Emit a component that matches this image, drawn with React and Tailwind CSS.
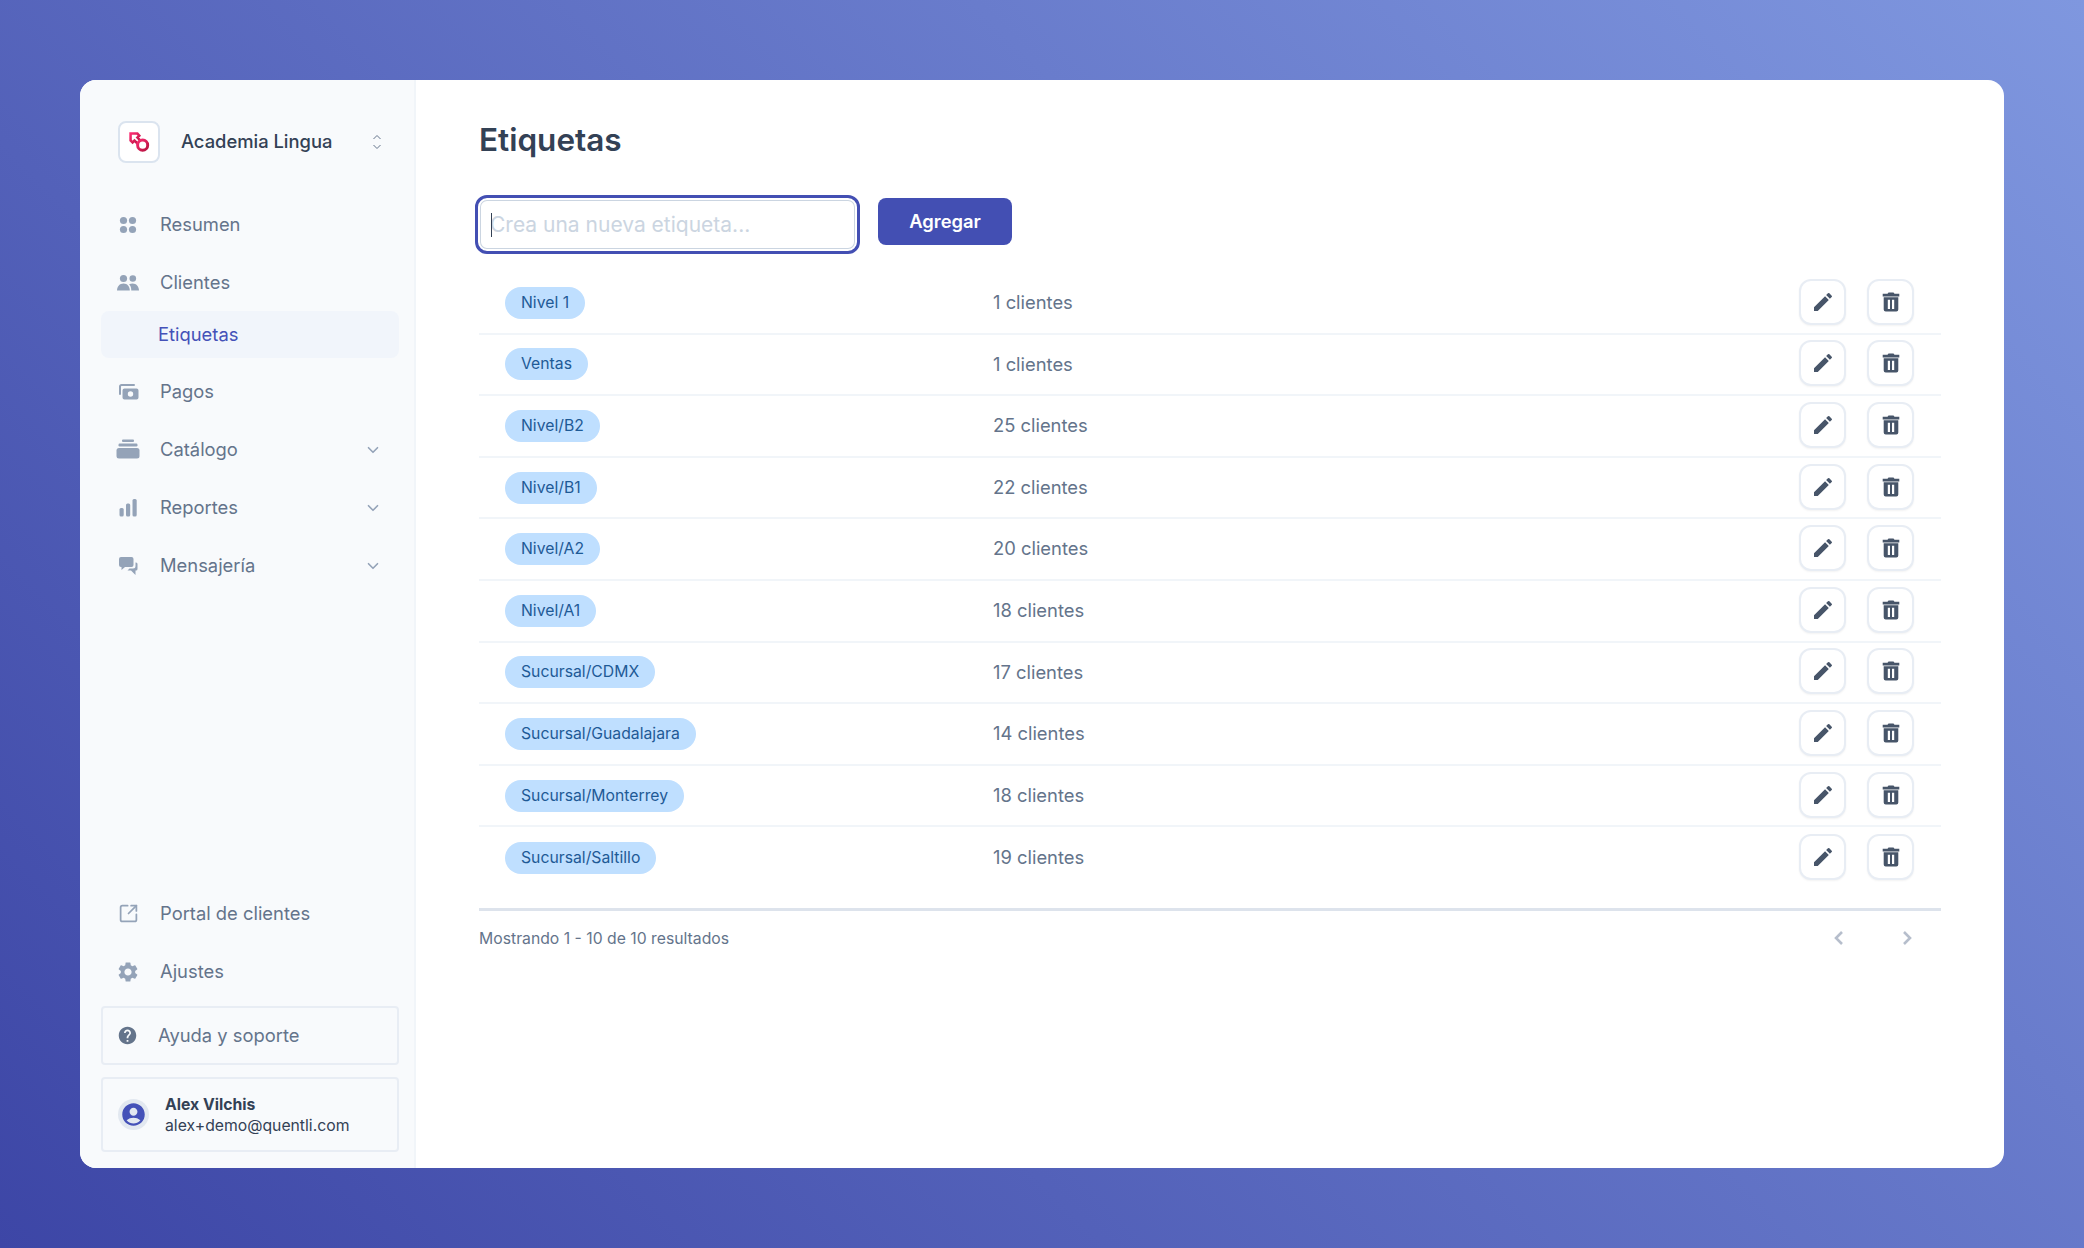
import { ChevronDown, SquareArrowOutUpRight } from 'lucide-react';
import { MdAccountCircle, MdEdit, MdHelp, MdSettings } from 'react-icons/md';

const tags = [
  ['Nivel 1', 1],
  ['Ventas', 1],
  ['Nivel/B2', 25],
  ['Nivel/B1', 22],
  ['Nivel/A2', 20],
  ['Nivel/A1', 18],
  ['Sucursal/CDMX', 17],
  ['Sucursal/Guadalajara', 14],
  ['Sucursal/Monterrey', 18],
  ['Sucursal/Saltillo', 19],
];

function DotsIcon() {
  return (
    <svg viewBox="0 0 24 24" className="w-6 h-6 fill-current">
      <circle cx="7.5" cy="7.5" r="3.6" />
      <circle cx="16.5" cy="7.5" r="3.6" />
      <circle cx="7.5" cy="16.5" r="3.6" />
      <circle cx="16.5" cy="16.5" r="3.6" />
    </svg>
  );
}

function UsersIcon() {
  return (
    <svg viewBox="0 0 24 24" className="w-6 h-6 fill-current overflow-visible">
      <circle cx="7.5" cy="7.5" r="3.6" />
      <circle cx="16.8" cy="7.5" r="3.3" />
      <path d="M1 19.5c0-4.2 2.8-7 6.5-7s6.3 2.8 6.3 7z" />
      <path d="M15.3 19.5c0-2.8-.8-4.9-2.2-6.3 1-.5 2.3-.7 3.5-.7 3.6 0 6.4 2.8 6.4 7z" />
    </svg>
  );
}

function CashIcon() {
  return (
    <svg viewBox="0 0 24 24" className="w-6 h-6 overflow-visible">
      <path d="M4 14V6.5A1.5 1.5 0 0 1 5.500 5H18" fill="none" stroke="currentColor" strokeWidth="2" strokeLinecap="round" />
      <path
        fill="currentColor"
        fillRule="evenodd"
        d="M8.500 8.500h12a2 2 0 0 1 2 2v7a2 2 0 0 1-2 2h-12a2 2 0 0 1-2-2v-7a2 2 0 0 1 2-2zM14.500 11.300a2.700 2.700 0 1 0 0 5.400 2.700 2.700 0 0 0 0-5.400z"
      />
    </svg>
  );
}

function StackIcon() {
  return (
    <svg viewBox="0 0 24 24" className="w-6 h-6 fill-current overflow-visible">
      <rect x="6" y="1.500" width="12" height="2.500" rx="1" />
      <rect x="2.500" y="5.500" width="19" height="3" rx="1.200" />
      <rect x="0.500" y="10" width="23" height="10.500" rx="2.500" />
    </svg>
  );
}

function BarsIcon() {
  return (
    <svg viewBox="0 0 24 24" className="w-6 h-6 fill-current">
      <rect x="3.500" y="12" width="4.200" height="8.500" rx="1.500" />
      <rect x="10" y="7.500" width="4.200" height="13" rx="1.500" />
      <rect x="16.500" y="3" width="4.200" height="17.500" rx="1.500" />
    </svg>
  );
}

function ChatIcon() {
  return (
    <svg viewBox="0 0 24 24" className="w-6 h-6 fill-current">
      <path d="M5 3h10.500a2 2 0 0 1 2 2v6a2 2 0 0 1-2 2H9l-3.500 3v-3H5a2 2 0 0 1-2-2V5a2 2 0 0 1 2-2z" />
      <path d="M19.500 8.500h.5a1.500 1.500 0 0 1 1.500 1.500v5a1.500 1.500 0 0 1-1.500 1.500h-.5V21l-4.500-4.500h-3.500l2-2h3.500a2.500 2.500 0 0 0 2.500-2.500z" />
    </svg>
  );
}

function TrashIcon() {
  return (
    <svg viewBox="0 0 24 24" className="w-6 h-6 fill-current">
      <path d="M9.500 2.500h5l1 1.300h4.800v2.700H3.700V3.800h4.800z" />
      <path
        fillRule="evenodd"
        d="M4.700 7.200h14.600v12.300a2 2 0 0 1-2 2H6.700a2 2 0 0 1-2-2zM8.800 9.800v9.200h2.200V9.800zm4.200 0v9.200h2.200V9.800z"
      />
    </svg>
  );
}

function Logo() {
  return (
    <svg viewBox="0 0 20 20" className="w-[21px] h-[21px]" fill="none">
      <defs>
        <linearGradient id="logo-grad" x1="0" y1="0" x2="1" y2="1">
          <stop offset="0" stopColor="#fb2c72" />
          <stop offset="1" stopColor="#b5123f" />
        </linearGradient>
      </defs>
      <path d="M1.500 1.500h6.500l1.800 2-1.800 1.800 3 3-2.800 2.800-3-3-1.800 1.800-1.900-1.900z" stroke="url(#logo-grad)" strokeWidth="2.400" />
      <circle cx="13" cy="12.500" r="4.800" stroke="url(#logo-grad)" strokeWidth="2.800" fill="#fff" />
    </svg>
  );
}

function NavItem({ icon, label, chevron }) {
  return (
    <div className="h-[47px] flex items-center pl-[15px] pr-[17px] text-[18.375px] text-[#64748b]">
      <span className="w-6 h-6 flex items-center justify-center text-[#94a3b8] shrink-0">{icon}</span>
      <span className="ml-5">{label}</span>
      {chevron && <ChevronDown className="ml-auto w-[18px] h-[18px] text-[#94a3b8]" strokeWidth={2.2} />}
    </div>
  );
}

function Sidebar() {
  return (
    <aside className="w-[336px] shrink-0 bg-[#f8fafc] border-r-2 border-[#f1f5f9] flex flex-col pl-[21px] pr-[15px] pb-4">
      <div className="flex items-center pl-[17px] pt-[41px] pr-[16px]">
        <div className="w-[42px] h-[42px] bg-white border-2 border-[#dbe4ef] rounded-lg flex items-center justify-center">
          <Logo />
        </div>
        <span className="ml-[21px] text-[18.375px] font-medium text-[#334155]">Academia Lingua</span>
        <svg viewBox="0 0 12 18" className="ml-auto w-3 h-[18px] text-[#64748b]" fill="none" stroke="currentColor" strokeWidth="1">
          <path d="M2.500 6 6 2.500 9.500 6M2.500 12 6 15.500 9.500 12" />
        </svg>
      </div>

      <nav className="mt-[38px] flex flex-col">
        <NavItem icon={<DotsIcon />} label="Resumen" />
        <div className="mt-[11px]">
          <NavItem icon={<UsersIcon />} label="Clientes" />
        </div>
        <div className="mt-[5px] h-[47px] rounded-lg bg-[#f1f5fb] flex items-center pl-[57px] text-[18.375px] text-[#4451b8]">
          Etiquetas
        </div>
        <div className="mt-[10px] flex flex-col gap-[11px]">
          <NavItem icon={<CashIcon />} label="Pagos" />
          <NavItem icon={<StackIcon />} label="Catálogo" chevron />
          <NavItem icon={<BarsIcon />} label="Reportes" chevron />
          <NavItem icon={<ChatIcon />} label="Mensajería" chevron />
        </div>
      </nav>

      <div className="mt-auto flex flex-col">
        <NavItem icon={<SquareArrowOutUpRight className="w-[21px] h-[21px]" strokeWidth={2} />} label="Portal de clientes" />
        <div className="mt-[11px]">
          <NavItem icon={<MdSettings className="w-6 h-6" />} label="Ajustes" />
        </div>
        <div className="mt-[11px] h-[59px] border-2 border-[#e8edf4] rounded flex items-center pl-[14px] text-[18.375px] text-[#64748b]">
          <MdHelp className="w-[21px] h-[21px] text-[#64748b]" />
          <span className="ml-5">Ayuda y soporte</span>
        </div>
        <div className="mt-3 h-[75px] border-2 border-[#e8edf4] rounded flex items-center pl-[15px]">
          <div className="w-[31px] h-[31px] rounded-full bg-[#e2e8f0] flex items-center justify-center">
            <MdAccountCircle className="w-[27px] h-[27px] text-[#4451b8]" />
          </div>
          <div className="ml-4 text-[15.75px] leading-[21px] text-[#334155]">
            <div className="font-bold">Alex Vilchis</div>
            <div>alex+demo@quentli.com</div>
          </div>
        </div>
      </div>
    </aside>
  );
}

function TagRow({ name, count, last }) {
  return (
    <div className={`h-[61.6px] flex items-center pl-[26px] pr-[27px] ${last ? '' : 'border-b-2 border-[#f1f5f9]'}`}>
      <div className="w-[488px] shrink-0">
        <span className="inline-block rounded-full bg-[#bfdfff] px-4 py-[5px] text-[15.75px] leading-[22px] text-[#1e5a96]">{name}</span>
      </div>
      <span className="text-[18.375px] text-[#64748b]">{count} clientes</span>
      <div className="ml-auto mb-[2px] flex gap-[21px]">
        <button className="w-[47px] h-[46px] bg-white border-2 border-[#e8edf4] rounded-xl flex items-center justify-center text-[#475569] shadow-xs">
          <MdEdit className="w-6 h-6" />
        </button>
        <button className="w-[47px] h-[46px] bg-white border-2 border-[#e8edf4] rounded-xl flex items-center justify-center text-[#475569] shadow-xs">
          <TrashIcon />
        </button>
      </div>
    </div>
  );
}

export default function App() {
  return (
    <div className="w-[2084px] h-[1248px] p-20 bg-[linear-gradient(45deg,#3d46a6,#7f97df)] [font-family:Inter,sans-serif]">
      <div className="h-full flex bg-white rounded-2xl overflow-hidden">
        <Sidebar />
        <main className="flex-1 px-[63px]">
          <h1 className="mt-[40px] text-[31.5px] leading-10 font-semibold text-[#334155]">Etiquetas</h1>
          <div className="mt-[35px] -ml-[4px] flex items-start">
            <div className="relative">
              <input
                placeholder="Crea una nueva etiqueta..."
                className="w-[385px] h-[59px] rounded-xl bg-white border-[3px] border-[#434fb3] shadow-[inset_0_0_0_2px_#fff,inset_0_0_0_3px_#cbd5e1] pl-[12px] text-[21px] outline-none placeholder:text-[#cbd5e1]"
              />
              <span className="absolute left-4 top-[18px] w-px h-6 bg-[#334155]" />
            </div>
            <button className="ml-[18px] mt-[3px] w-[134px] h-[47px] rounded-lg bg-[#434fb3] text-white text-[18.375px] font-semibold">Agregar</button>
          </div>

          <div className="mt-[19px]">
            {tags.map(([name, count], i) => (
              <TagRow key={name} name={name} count={count} last={i === tags.length - 1} />
            ))}
          </div>

          <div className="mt-[19px] border-t-[3px] border-[#dde3ec] h-[58px] flex items-center pr-[22px] text-[15.75px] text-[#64748b]">
            <span>Mostrando 1 - 10 de 10 resultados</span>
            <svg viewBox="0 0 24 24" className="ml-auto w-6 h-6 text-[#b6becc]" fill="none" stroke="currentColor" strokeWidth="2.600">
              <path d="M15 6l-6 6 6 6" />
            </svg>
            <svg viewBox="0 0 24 24" className="ml-[44px] w-6 h-6 text-[#b6becc]" fill="none" stroke="currentColor" strokeWidth="2.600">
              <path d="M9 6l6 6-6 6" />
            </svg>
          </div>
        </main>
      </div>
    </div>
  );
}
